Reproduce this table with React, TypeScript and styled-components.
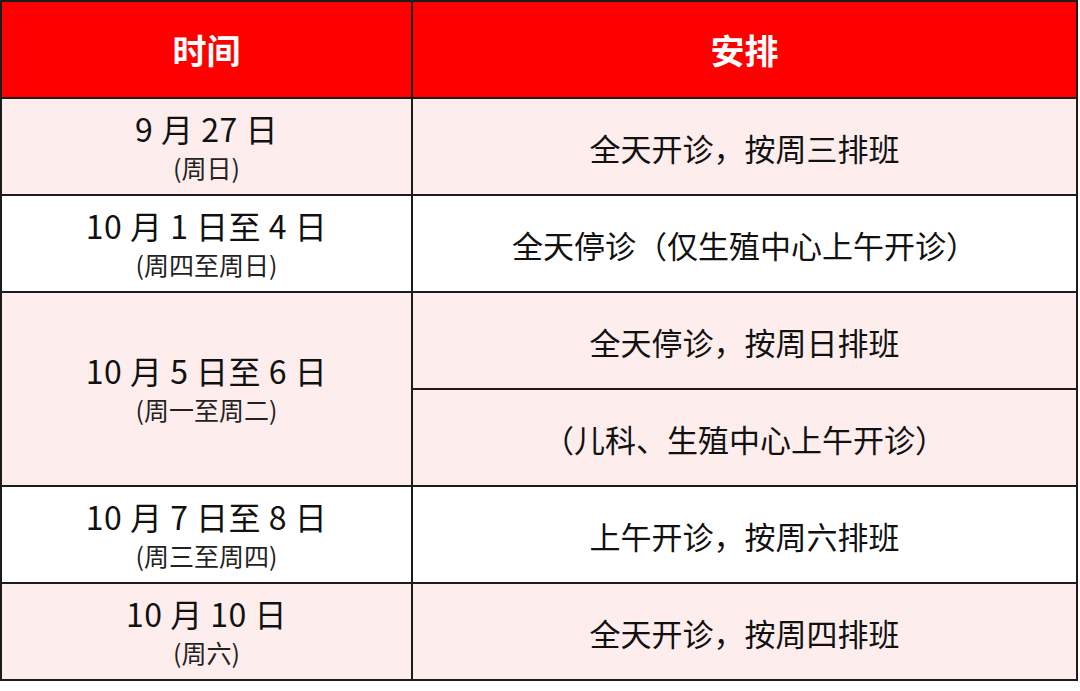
import styled, { createGlobalStyle } from "styled-components";

const GlobalStyle = createGlobalStyle`
  html, body {
    margin: 0;
    padding: 0;
    background: #ffffff;
  }
  body {
    font-family: "Noto Sans CJK SC", "Noto Sans", sans-serif;
    color: #111111;
  }
`;

const Table = styled.div`
  width: 1078px;
  display: grid;
  grid-template-columns: 409px 1fr;
  grid-auto-rows: 95px;
  gap: 2px;
  padding: 2px;
  box-sizing: border-box;
  background: #1c1c1c;
`;

const HeadCell = styled.div`
  background: #fe0000;
  color: #ffffff;
  font-size: 34px;
  font-weight: 700;
  display: flex;
  align-items: center;
  justify-content: center;
`;

const Cell = styled.div<{ $pink?: boolean; $span?: number }>`
  background: ${(p) => (p.$pink ? "#fdeded" : "#ffffff")};
  grid-row: ${(p) => (p.$span ? `span ${p.$span}` : "auto")};
  display: flex;
  flex-direction: column;
  align-items: center;
  justify-content: center;
`;

const DateLine = styled.div`
  font-size: 32px;
  line-height: 40px;
  letter-spacing: 0.5px;
  white-space: pre;
`;

const WeekLine = styled.div`
  font-size: 25px;
  line-height: 38px;
  color: #222222;
`;

const Plan = styled.div`
  font-size: 31px;
  line-height: 40px;
  margin-top: 2px;
`;

type Row = { date: string; week: string; plans: string[]; pink: boolean };

const rows: Row[] = [
  { date: "9 月 27 日", week: "(周日)", plans: ["全天开诊，按周三排班"], pink: true },
  { date: "10 月 1 日至 4 日", week: "(周四至周日)", plans: ["全天停诊（仅生殖中心上午开诊）"], pink: false },
  {
    date: "10 月 5 日至 6 日",
    week: "(周一至周二)",
    plans: ["全天停诊，按周日排班", "（儿科、生殖中心上午开诊）"],
    pink: true,
  },
  { date: "10 月 7 日至 8 日", week: "(周三至周四)", plans: ["上午开诊，按周六排班"], pink: false },
  { date: "10 月 10 日", week: "(周六)", plans: ["全天开诊，按周四排班"], pink: true },
];

export default function App() {
  return (
    <>
      <GlobalStyle />
      <Table>
        <HeadCell>时间</HeadCell>
        <HeadCell>安排</HeadCell>
        {rows.map((r) => [
          <Cell key={r.date} $pink={r.pink} $span={r.plans.length}>
            <DateLine>{r.date}</DateLine>
            <WeekLine>{r.week}</WeekLine>
          </Cell>,
          ...r.plans.map((p) => (
            <Cell key={r.date + p} $pink={r.pink}>
              <Plan>{p}</Plan>
            </Cell>
          )),
        ])}
      </Table>
    </>
  );
}
